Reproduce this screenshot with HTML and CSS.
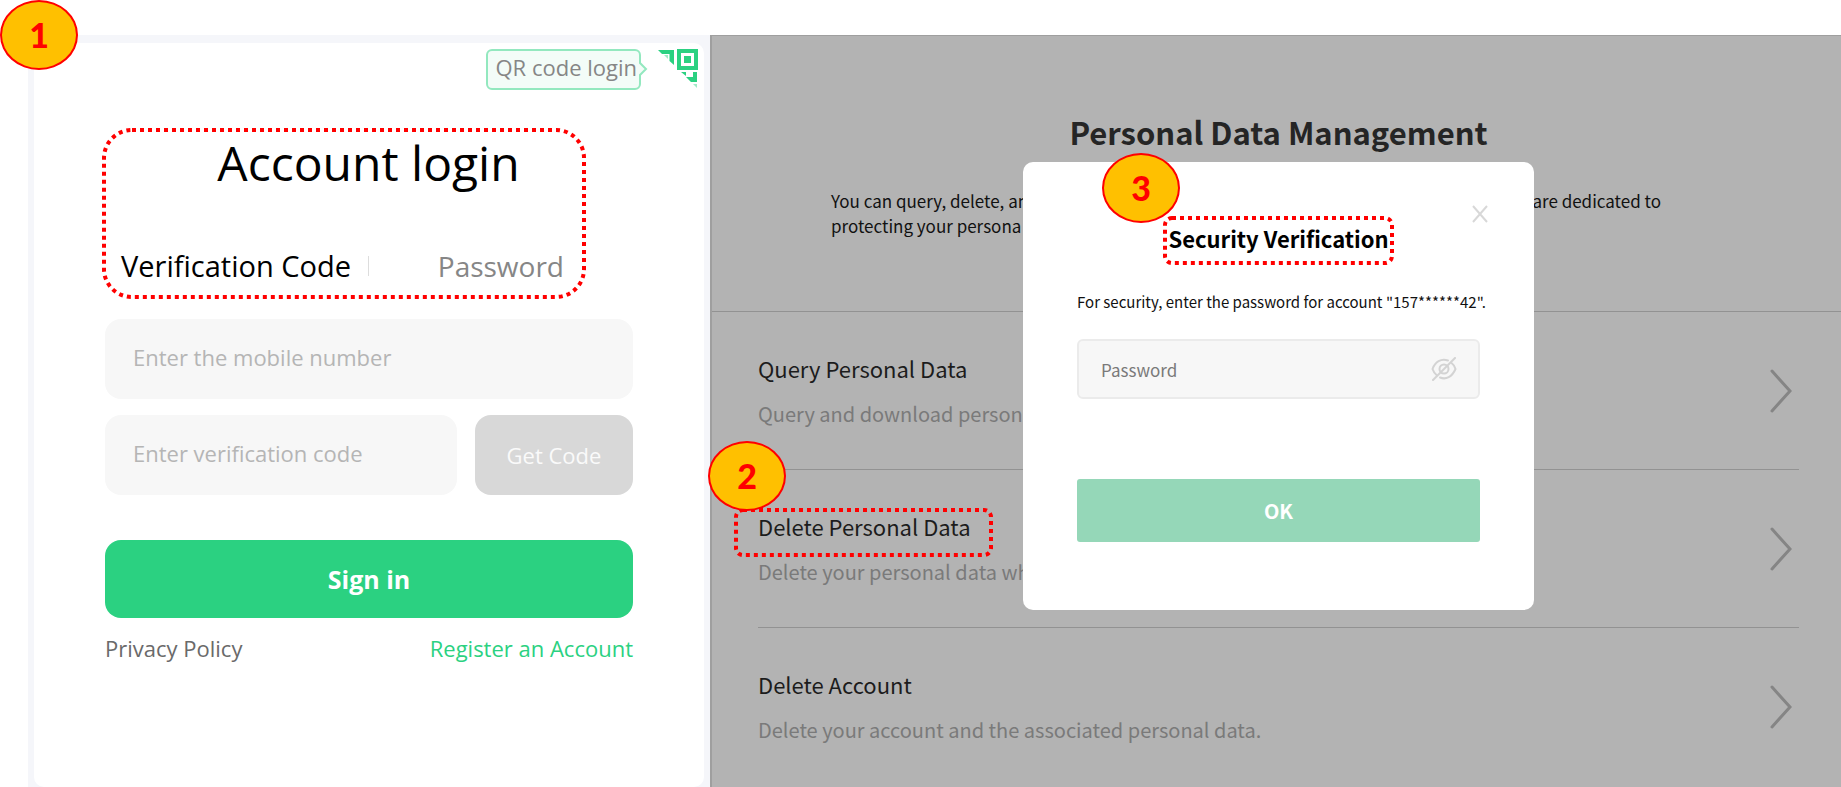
FILE: index.html
```html
<!DOCTYPE html>
<html lang="en">
<head>
<meta charset="utf-8">
<title>Personal Data Management</title>
<link rel="stylesheet" href="styles.css">
</head>
<body>
<main class="stage">
  <span class="badge badge-one">1</span>

  <section class="login-panel">
    <form class="card">
      <div class="qr-row">
        <a class="qr-link" href="#">QR code login
          <svg class="qr-arrow" viewBox="0 0 9 16"><path d="M0 1 L7 8 L0 15" fill="#f3fcf8" stroke="#93e8bf" stroke-width="2"/></svg>
        </a>
        <svg class="qr-icon" viewBox="0 0 41 40" fill="#2bd181">
          <path d="M1 1H17V16L12.500 12V5H5Z"/>
          <path d="M7 6H11V10Z" opacity=".45"/>
          <path d="M20 0H41V21H20ZM24 4V17H37V4Z" fill-rule="evenodd"/>
          <rect x="27" y="7" width="7" height="7"/>
          <path d="M24 23H29V27Z"/>
          <path d="M36 23H40V33H34L29 28H36Z"/>
          <path d="M36 35H40V39Z" opacity=".45"/>
        </svg>
      </div>

      <div class="login-head">
        <svg class="dots"><rect class="dots-line" x="2" y="2" rx="28"/></svg>
        <h1 class="login-title">Account login</h1>
        <div class="tabs">
          <button class="tab tab-active" type="button">Verification Code</button>
          <button class="tab" type="button">Password</button>
        </div>
      </div>

      <div class="fields">
        <input class="field" type="text" placeholder="Enter the mobile number" aria-label="Mobile number">
        <div class="code-row">
          <input class="field" type="text" placeholder="Enter verification code" aria-label="Verification code">
          <button class="get-code" type="button">Get Code</button>
        </div>
      </div>
      <button class="sign-in" type="button">Sign in</button>
      <div class="links">
        <a class="policy" href="#">Privacy Policy</a>
        <a class="register" href="#">Register an Account</a>
      </div>
    </form>
  </section>

  <section class="data-panel">
    <header class="data-head">
      <h2 class="data-title">Personal Data Management</h2>
      <div class="intro">
        <p class="intro-line"><span>You can query, delete, an</span><span>are dedicated to</span></p>
        <p class="intro-line">protecting your persona</p>
      </div>
    </header>

    <ul class="rows">
      <li class="row">
        <div class="row-text">
          <h3 class="row-title">Query Personal Data</h3>
          <p class="row-desc">Query and download personal</p>
        </div>
        <svg class="chevron" viewBox="0 0 22 44"><path d="M2 2 L20 22 L2 42"/></svg>
      </li>
      <li class="row">
        <div class="row-text">
          <h3 class="row-title">Delete Personal Data</h3>
          <p class="row-desc">Delete your personal data when</p>
          <div class="mark-delete">
            <svg class="dots"><rect class="dots-line" x="2" y="2" rx="7"/></svg>
            <span class="badge badge-two">2</span>
          </div>
        </div>
        <svg class="chevron" viewBox="0 0 22 44"><path d="M2 2 L20 22 L2 42"/></svg>
      </li>
      <li class="row">
        <div class="row-text">
          <h3 class="row-title">Delete Account</h3>
          <p class="row-desc">Delete your account and the associated personal data.</p>
        </div>
        <svg class="chevron" viewBox="0 0 22 44"><path d="M2 2 L20 22 L2 42"/></svg>
      </li>
    </ul>

    <div class="overlay">
      <form class="dialog" role="dialog" aria-labelledby="dialog-title">
        <button class="close" type="button" aria-label="Close">
          <svg viewBox="0 0 16 18"><path d="M1 1 L15 17 M15 1 L1 17"/></svg>
        </button>
        <div class="dialog-head">
          <svg class="dots"><rect class="dots-line" x="2" y="2" rx="7"/></svg>
          <h2 class="dialog-title" id="dialog-title">Security Verification</h2>
          <span class="badge badge-three">3</span>
        </div>
        <label class="dialog-text" for="pwd">For security, enter the password for account "157******42".</label>
        <div class="pwd-box">
          <input class="pwd" id="pwd" type="password" placeholder="Password">
          <button class="eye" type="button" aria-label="Show password">
            <svg viewBox="0 0 26 24"><path d="M17 3.500 C10 1 4 5 1.500 12 C2.500 15 4 17 6 18.500 M20.500 6 C22.500 7.500 24 9.500 24.500 12 C21 20 15 23 9 20.500"/><circle cx="13" cy="12" r="4.500"/><path d="M24 1 L2 23"/></svg>
          </button>
        </div>
        <button class="ok" type="button">OK</button>
      </form>
    </div>
  </section>
</main>
</body>
</html>
```
FILE: styles.css
```css
* { box-sizing: border-box; }

body {
  margin: 0;
  background: #fff;
  font-family: "Open Sans", "Noto Sans", sans-serif;
}

h1, h2, h3, p, ul { margin: 0; padding: 0; font-weight: 400; }
ul { list-style: none; }
a { text-decoration: none; }
button, input { font: inherit; border: 0; padding: 0; background: none; }
svg { display: block; }

.stage {
  position: relative;
  display: grid;
  grid-template-columns: 682fr 1131fr;
  min-height: 100vh;
  padding: 35px 0 0 28px;
}

/* numbered callouts */
.badge {
  position: absolute;
  z-index: 3;
  display: flex;
  align-items: center;
  justify-content: center;
  width: 78px;
  height: 70px;
  border: 2px solid #f00;
  border-radius: 50%;
  background: #ffc000;
  color: #f00;
  font: 900 34px/34px Lato, sans-serif;
}
.badge-one { left: 0; top: 0; }
.badge-two { left: -26px; top: -67px; }
.badge-three { left: -61px; top: -63px; }

/* dotted frames */
.dots {
  position: absolute;
  inset: 0;
  width: 100%;
  height: 100%;
  pointer-events: none;
}
.dots-line {
  width: calc(100% - 4px);
  height: calc(100% - 4px);
  fill: none;
  stroke: #f00;
  stroke-width: 4;
  stroke-dasharray: 4 4;
}

/* login */
.login-panel { padding: 8px 6px 0; background: #f5f6fa; }
.card {
  height: 100%;
  padding: 6px 71px 0;
  border-radius: 10px;
  background: #fff;
}
.qr-row {
  display: flex;
  justify-content: flex-end;
  gap: 16px;
  margin-right: -65px;
}
.qr-link {
  position: relative;
  height: 41px;
  padding: 0 2px 0 8px;
  border: 2px solid #93e8bf;
  border-radius: 6px;
  background: #f3fcf8;
  color: #868686;
  font-size: 22px;
  line-height: 32px;
}
.qr-arrow { position: absolute; right: -9px; top: 10px; width: 9px; height: 16px; }
.qr-icon { width: 41px; height: 40px; }

.login-head {
  position: relative;
  width: 484px;
  margin: 38px 0 0 -3px;
  padding: 8px 22px 0 19px;
  height: 171px;
}
.login-title {
  padding-left: 52px;
  text-align: center;
  font-size: 48px;
  line-height: 54px;
  color: #000;
}
.tabs { display: flex; justify-content: space-between; padding-top: 56px; }
.tab { font-size: 28px; line-height: 40px; color: #868686; }
.tab-active { position: relative; font-size: 29px; color: #000; }
.tab-active::after {
  content: "";
  position: absolute;
  right: -18px;
  top: 10px;
  width: 1px;
  height: 20px;
  background: #ddd;
}

.fields { display: grid; gap: 16px; margin-top: 20px; }
.field {
  width: 100%;
  min-width: 0;
  height: 80px;
  padding: 0 28px 4px;
  border-radius: 16px;
  background: #f7f7f7;
  font-size: 22px;
}
.field::placeholder { color: #b5b5b5; opacity: 1; }
.code-row { display: grid; grid-template-columns: 352fr 158fr; gap: 18px; }
.get-code {
  border-radius: 16px;
  background: #d8d8d8;
  color: #fafafa;
  font-size: 22px;
  font-weight: 500;
}
.sign-in {
  width: 100%;
  height: 78px;
  margin-top: 45px;
  border-radius: 16px;
  background: #2bd181;
  color: #fff;
  font-size: 25px;
  font-weight: 700;
}
.links {
  display: flex;
  justify-content: space-between;
  padding-top: 14px;
  font-size: 22px;
  line-height: 32px;
}
.policy { color: #6a6a6a; }
.register { color: #2bd181; }

/* personal data page */
.data-panel {
  position: relative;
  border: solid #9f9f9f;
  border-width: 1px 0 0 2px;
  background: #b3b3b3;
  font-family: "Noto Sans CJK SC", "Noto Sans", sans-serif;
}
.data-head {
  height: 276px;
  padding: 72px 0 0 4px;
  border-bottom: 1px solid #929292;
}
.data-title {
  text-align: center;
  font-size: 31px;
  font-weight: 700;
  line-height: 48px;
  color: #252525;
}
.intro {
  width: 830px;
  margin: 32px 0 0 115px;
  font-size: 17px;
  line-height: 25px;
  color: #111;
}
.intro-line { display: flex; justify-content: space-between; }

.rows { padding: 0 42px 0 46px; }
.row {
  display: flex;
  align-items: center;
  justify-content: space-between;
  height: 158px;
  padding-right: 7px;
  border-bottom: 1px solid #929292;
}
.row:last-child { border-bottom: 0; }
.row-text { position: relative; padding-top: 2px; }
.row-title { font-size: 22px; line-height: 44px; color: #1c1c1c; }
.row-desc { font-size: 20px; line-height: 48px; color: #7a7a7a; }
.chevron {
  width: 22px;
  height: 44px;
  fill: none;
  stroke: #858585;
  stroke-width: 3;
  stroke-linecap: round;
}
.mark-delete { position: absolute; left: -24px; top: 6px; width: 259px; height: 49px; }

/* security dialog */
.overlay {
  position: absolute;
  inset: 0;
  display: flex;
  align-items: flex-start;
  justify-content: center;
  padding: 126px 0 0 4px;
}
.dialog {
  position: relative;
  width: 511px;
  padding: 54px 54px 68px;
  border-radius: 10px;
  background: #fff;
}
.close { position: absolute; right: 46px; top: 43px; width: 16px; height: 18px; }
.close svg { width: 16px; height: 18px; stroke: #d8d8d8; stroke-width: 2; }
.dialog-head { position: relative; width: 231px; height: 49px; margin: 0 auto; }
.dialog-title {
  text-align: center;
  font-size: 22px;
  font-weight: 700;
  line-height: 45px;
  white-space: nowrap;
  color: #000;
}
.dialog-text {
  display: block;
  margin-top: 22px;
  font-size: 15px;
  line-height: 30px;
  white-space: nowrap;
  color: #111;
}
.pwd-box {
  display: flex;
  align-items: center;
  height: 60px;
  margin-top: 22px;
  padding: 0 21px 0 22px;
  border: 2px solid #ebebeb;
  border-radius: 6px;
  background: #f7f7f7;
}
.pwd { flex: 1; min-width: 0; font-size: 17px; }
.pwd::placeholder { color: #7a7a7a; opacity: 1; }
.eye { width: 26px; height: 24px; }
.eye svg { width: 26px; height: 24px; fill: none; stroke: #d3d3d3; stroke-width: 2; stroke-linecap: round; }
.ok {
  width: 100%;
  height: 63px;
  margin-top: 80px;
  border-radius: 3px;
  background: #95d7b8;
  color: #fff;
  font-size: 20px;
  font-weight: 700;
}
```
